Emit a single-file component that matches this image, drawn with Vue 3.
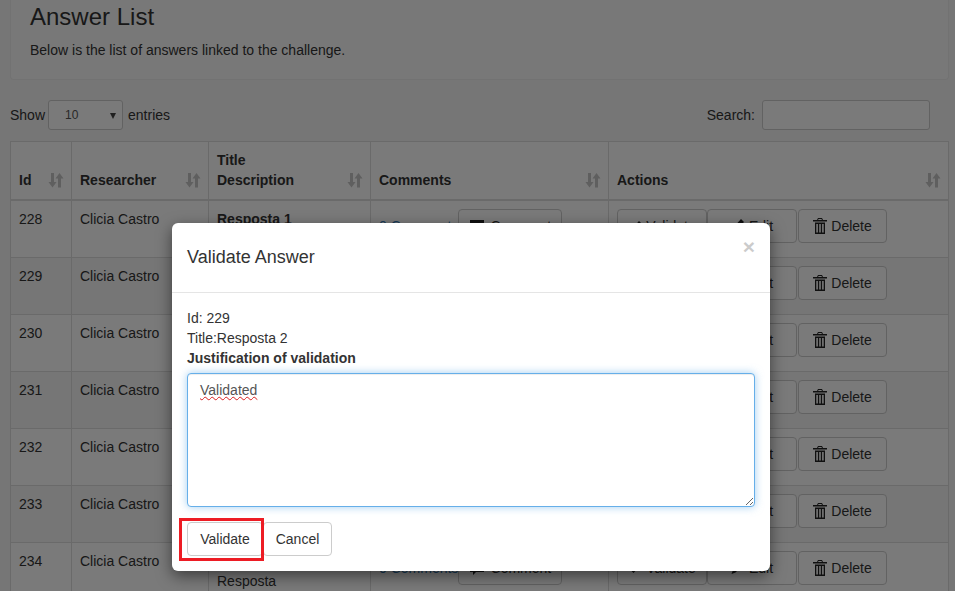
<template>
  <div class="page">
    <div class="jumbotron">
      <h2>Answer List</h2>
      <p>Below is the list of answers linked to the challenge.</p>
    </div>

    <div class="table-controls">
      <label class="length">
        Show
        <span class="select-box"><span>10</span><i class="select-arrow"></i></span>
        entries
      </label>
      <label class="search">
        Search:
        <input type="text" class="search-input" />
      </label>
    </div>

    <table class="answers">
      <colgroup>
        <col style="width: 61px" />
        <col style="width: 137px" />
        <col style="width: 162px" />
        <col style="width: 238px" />
        <col />
      </colgroup>
      <thead>
        <tr>
          <th v-for="col in columns" :key="col.name">
            <div v-if="col.over">{{ col.over }}</div>
            <div>{{ col.name }}</div>
            <svg class="sort-icon" width="16" height="16" viewBox="0 0 16 16">
              <path d="M3 1h3v9h2.500L4.500 15.500 0.500 10H3z" />
              <path d="M10 15.500h3v-9h2.500L11.500 1 7.500 6.500H10z" />
            </svg>
          </th>
        </tr>
      </thead>
      <tbody>
        <tr v-for="(row, i) in rows" :key="row.id" :class="{ striped: i % 2 === 1 }">
          <td>{{ row.id }}</td>
          <td>Clicia Castro</td>
          <td>
            <strong>{{ row.title }}</strong>
            <div>Resposta</div>
          </td>
          <td>
            <div class="cell-row">
              <a class="link">0 Comments</a>
              <button class="btn btn-comment">
                <svg width="14" height="14" viewBox="0 0 14 14"><path d="M0 1h14v10H6l-3 3v-3H0z" /></svg>
                Comment
              </button>
            </div>
          </td>
          <td>
            <div class="cell-row">
              <button class="btn btn-action">
                <svg width="14" height="14" viewBox="0 0 14 14"><path d="M1 7.500l2-2 2.500 2.500L11 2l2 2-7.500 8z" /></svg>
                Validate
              </button>
              <button class="btn btn-action">
                <svg width="14" height="14" viewBox="0 0 14 14"><path d="M10 0l3 3-8.500 8.500-4 1.500 1.500-4z" /></svg>
                Edit
              </button>
              <button class="btn btn-action btn-delete">
                <svg width="14" height="16" viewBox="0 0 14 16">
                  <path d="M5 0h4l1 2h4v1.500H0V2h4zM5.500 1l-.4 1h3.800l-.4-1zM2 4.500h10V16H2zM3.300 6v8.500h1.600V6zM6.200 6v8.500h1.600V6zM9.100 6v8.500h1.600V6z" fill-rule="evenodd" />
                </svg>
                Delete
              </button>
            </div>
          </td>
        </tr>
      </tbody>
    </table>

    <div class="backdrop"></div>

    <div class="modal">
      <div class="modal-header">
        <h4>Validate Answer</h4>
        <span class="close">×</span>
      </div>
      <div class="modal-body">
        <div>Id: 229</div>
        <div>Title:Resposta 2</div>
        <label class="justify-label">Justification of validation</label>
        <textarea class="justify" spellcheck="false">Validated</textarea>
      </div>
      <div class="modal-footer">
        <button class="btn">Validate</button>
        <button class="btn">Cancel</button>
      </div>
      <div class="highlight"></div>
    </div>
  </div>
</template>

<script setup>
const columns = [
  { name: 'Id' },
  { name: 'Researcher' },
  { over: 'Title', name: 'Description' },
  { name: 'Comments' },
  { name: 'Actions' }
];

const rows = [228, 229, 230, 231, 232, 233, 234].map((id, i) => ({
  id,
  title: 'Resposta ' + (i + 1)
}));
</script>

<style scoped>
.page {
  position: relative;
  width: 955px;
  height: 591px;
  overflow: hidden;
  padding: 0 6px 0 10px;
  box-sizing: border-box;
  background: #f6f6f6;
  color: #333;
  font-family: "Liberation Sans", Arial, sans-serif;
  font-size: 14px;
  line-height: 20px;
}

.jumbotron {
  height: 80px;
  padding: 0 19px;
  box-sizing: border-box;
  background: #fbfbfb;
  border: 1px solid #eee;
  border-top: none;
  border-radius: 0 0 4px 4px;
}

.jumbotron h2 {
  margin: 0;
  padding-top: 4px;
  font-size: 24px;
  line-height: 26px;
  font-weight: 400;
}

.jumbotron p {
  margin: 10px 0 0;
}

.table-controls {
  display: flex;
  justify-content: space-between;
  align-items: center;
  height: 30px;
  margin-top: 20px;
  padding-right: 19px;
}

.length,
.search {
  display: flex;
  align-items: center;
  gap: 3px;
}

.length .select-box {
  margin-right: 2px;
}

.search {
  gap: 7px;
}

.select-box {
  position: relative;
  display: flex;
  align-items: center;
  width: 75px;
  height: 30px;
  padding-left: 16px;
  box-sizing: border-box;
  border: 1px solid #ccc;
  border-radius: 3px;
  background: #fff;
  font-size: 12px;
  color: #555;
}

.select-arrow {
  position: absolute;
  right: 6px;
  top: 12px;
  border: 3.500px solid transparent;
  border-top: 6px solid #444;
  border-bottom: none;
}

.search-input {
  width: 168px;
  height: 30px;
  padding: 0 10px;
  box-sizing: border-box;
  border: 1px solid #ccc;
  border-radius: 3px;
  background: #fff;
}

.answers {
  width: 939px;
  margin-top: 11px;
  table-layout: fixed;
  border-collapse: collapse;
  background: #fff;
}

.answers th,
.answers td {
  padding: 8px;
  border: 1px solid #ddd;
  vertical-align: top;
  text-align: left;
}

.answers th {
  position: relative;
  vertical-align: bottom;
  padding-bottom: 9px;
  border-bottom-width: 2px;
  font-weight: 700;
}

.sort-icon {
  position: absolute;
  right: 7px;
  bottom: 11px;
  fill: #000;
  opacity: 0.22;
}

.striped {
  background: #f6f6f6;
}

.answers tbody tr {
  height: 57px;
}

.cell-row {
  display: flex;
  align-items: center;
  white-space: nowrap;
}

.link {
  color: #337ab7;
}

.btn {
  display: inline-flex;
  align-items: center;
  justify-content: center;
  height: 34px;
  padding: 6px 12px;
  box-sizing: border-box;
  border: 1px solid #ccc;
  border-radius: 4px;
  background: #fff;
  color: #333;
  font: inherit;
}

.btn svg {
  fill: #222;
  flex-shrink: 0;
}

.btn-comment {
  width: 104px;
  gap: 7px;
}

.btn-action {
  width: 90px;
  padding: 6px 0;
  gap: 4px;
}

.btn-delete {
  width: 89px;
  margin-left: 1px;
}

.backdrop {
  position: absolute;
  inset: 0;
  background: rgba(0, 0, 0, 0.52);
}

.modal {
  position: absolute;
  left: 172px;
  top: 223px;
  width: 598px;
  height: 348px;
  background: #fff;
  border-radius: 6px;
  box-shadow: 0 5px 15px rgba(0, 0, 0, 0.5);
}

.modal-header {
  position: relative;
  height: 70px;
  padding: 21px 15px 0;
  box-sizing: border-box;
  border-bottom: 1px solid #e5e5e5;
}

.modal-header h4 {
  margin: 0;
  font-size: 18px;
  line-height: 26px;
  font-weight: 400;
}

.close {
  position: absolute;
  right: 15px;
  top: 12px;
  font-size: 21px;
  font-weight: 700;
  line-height: 24px;
  color: #000;
  opacity: 0.2;
}

.modal-body {
  padding: 15px 15px 0;
}

.justify-label {
  display: block;
  font-weight: 700;
  margin-bottom: 5px;
}

.justify {
  display: block;
  width: 568px;
  height: 134px;
  padding: 6px 12px;
  box-sizing: border-box;
  border: 1px solid #66afe9;
  border-radius: 4px;
  outline: none;
  box-shadow: inset 0 1px 1px rgba(0, 0, 0, 0.075), 0 0 8px rgba(102, 175, 233, 0.6);
  color: #555;
  font: inherit;
  text-decoration: underline wavy #d81e1e 1px;
}

.modal-footer {
  display: flex;
  padding: 15px 15px 0;
}

.modal-footer .btn:first-child {
  width: 76px;
}

.modal-footer .btn:last-child {
  width: 69px;
}

.highlight {
  position: absolute;
  left: 7px;
  top: 295px;
  width: 85px;
  height: 43px;
  box-sizing: border-box;
  border: 3px solid #ed1c24;
  pointer-events: none;
}
</style>

<style>
html,
body {
  margin: 0;
  overflow: hidden;
}
</style>
